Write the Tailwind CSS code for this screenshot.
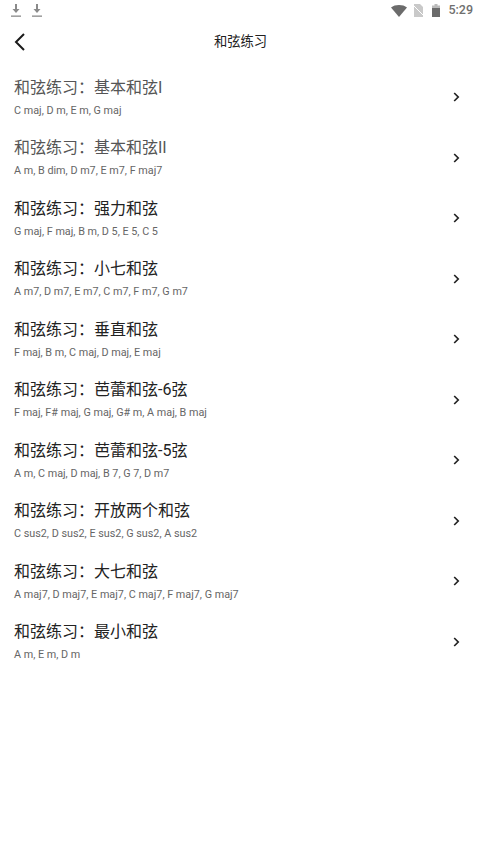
<!DOCTYPE html>
<html lang="zh">
<head>
  <meta charset="UTF-8" />
  <title>和弦练习</title>
  <script src="https://cdn.jsdelivr.net/npm/@tailwindcss/browser@4"></script>
</head>
<body class="bg-white font-['Roboto','Noto_Sans_CJK_SC',sans-serif] w-[480px] h-[854px] overflow-hidden">
  <!-- status bar -->
  <div class="h-[21px] flex items-center pl-[10px] pr-[7px] text-[#6f6f6f]">
    <svg class="w-[12px] h-[15px] mr-[9px]" viewBox="0 0 12 15" fill="#8a8a8a"><path d="M5 1h2v5h2.5L6 10 2.500 6H5z"/><rect x="1" y="12.500" width="10" height="1.300"/></svg>
    <svg class="w-[12px] h-[15px]" viewBox="0 0 12 15" fill="#8a8a8a"><path d="M5 1h2v5h2.5L6 10 2.500 6H5z"/><rect x="1" y="12.500" width="10" height="1.300"/></svg>
    <div class="flex-1"></div>
    <svg class="w-[16px] h-[12px] mr-[6px]" viewBox="0 0 16 12" fill="#6b6b6b"><path d="M0 2.500C2 .8 5 0 8 0s6 .8 8 2.500L8 12z"/></svg>
    <svg class="w-[11px] h-[13px] mr-[8px]" viewBox="0 0 11 13"><path d="M1 0h6l3 3v10H1z" fill="#c9c9c9"/><path d="M0 1l11 11" stroke="#fff" stroke-width="1"/></svg>
    <svg class="w-[8px] h-[13px] mr-[8px]" viewBox="0 0 8 13"><rect x="2.500" y="0" width="3" height="2" fill="#bbb"/><rect x="0" y="1.500" width="8" height="3" fill="#bbb"/><rect x="0" y="4" width="8" height="9" fill="#6b6b6b"/></svg>
    <span class="text-[12.500px] font-medium leading-none">5:29</span>
  </div>
  <!-- title bar -->
  <div class="h-[42px] flex items-center relative">
    <svg class="w-[12px] h-[18px] ml-[14px]" viewBox="0 0 12 18" fill="none" stroke="#1a1a1a" stroke-width="2"><path d="M10 1L2 9l8 8"/></svg>
    <div class="flex-1 text-center text-[13.300px] text-[#222] pr-[25px]">和弦练习</div>
  </div>
  <!-- list -->
  <div class="mt-[4px]">
    <div class="h-[60.500px] flex items-center pl-[14px] pr-[20px]">
      <div class="flex-1">
        <div class="text-[16px] leading-[22px] text-[#555]">和弦练习：基本和弦I</div>
        <div class="text-[10.800px] leading-[14px] mt-[5px] text-[#666]">C maj, D m, E m, G maj</div>
      </div>
      <svg class="w-[7px] h-[10px]" viewBox="0 0 7 10" fill="none" stroke="#222" stroke-width="1.700"><path d="M1.200 1l4 4-4 4"/></svg>
    </div>
    <div class="h-[60.500px] flex items-center pl-[14px] pr-[20px]">
      <div class="flex-1">
        <div class="text-[16px] leading-[22px] text-[#555]">和弦练习：基本和弦II</div>
        <div class="text-[10.800px] leading-[14px] mt-[5px] text-[#666]">A m, B dim, D m7, E m7, F maj7</div>
      </div>
      <svg class="w-[7px] h-[10px]" viewBox="0 0 7 10" fill="none" stroke="#222" stroke-width="1.700"><path d="M1.200 1l4 4-4 4"/></svg>
    </div>
    <div class="h-[60.500px] flex items-center pl-[14px] pr-[20px]">
      <div class="flex-1">
        <div class="text-[16px] leading-[22px] text-[#222]">和弦练习：强力和弦</div>
        <div class="text-[10.800px] leading-[14px] mt-[5px] text-[#666]">G maj, F maj, B m, D 5, E 5, C 5</div>
      </div>
      <svg class="w-[7px] h-[10px]" viewBox="0 0 7 10" fill="none" stroke="#222" stroke-width="1.700"><path d="M1.200 1l4 4-4 4"/></svg>
    </div>
    <div class="h-[60.500px] flex items-center pl-[14px] pr-[20px]">
      <div class="flex-1">
        <div class="text-[16px] leading-[22px] text-[#222]">和弦练习：小七和弦</div>
        <div class="text-[10.800px] leading-[14px] mt-[5px] text-[#666]">A m7, D m7, E m7, C m7, F m7, G m7</div>
      </div>
      <svg class="w-[7px] h-[10px]" viewBox="0 0 7 10" fill="none" stroke="#222" stroke-width="1.700"><path d="M1.200 1l4 4-4 4"/></svg>
    </div>
    <div class="h-[60.500px] flex items-center pl-[14px] pr-[20px]">
      <div class="flex-1">
        <div class="text-[16px] leading-[22px] text-[#222]">和弦练习：垂直和弦</div>
        <div class="text-[10.800px] leading-[14px] mt-[5px] text-[#666]">F maj, B m, C maj, D maj, E maj</div>
      </div>
      <svg class="w-[7px] h-[10px]" viewBox="0 0 7 10" fill="none" stroke="#222" stroke-width="1.700"><path d="M1.200 1l4 4-4 4"/></svg>
    </div>
    <div class="h-[60.500px] flex items-center pl-[14px] pr-[20px]">
      <div class="flex-1">
        <div class="text-[16px] leading-[22px] text-[#222]">和弦练习：芭蕾和弦-6弦</div>
        <div class="text-[10.800px] leading-[14px] mt-[5px] text-[#666]">F maj, F# maj, G maj, G# m, A maj, B maj</div>
      </div>
      <svg class="w-[7px] h-[10px]" viewBox="0 0 7 10" fill="none" stroke="#222" stroke-width="1.700"><path d="M1.200 1l4 4-4 4"/></svg>
    </div>
    <div class="h-[60.500px] flex items-center pl-[14px] pr-[20px]">
      <div class="flex-1">
        <div class="text-[16px] leading-[22px] text-[#222]">和弦练习：芭蕾和弦-5弦</div>
        <div class="text-[10.800px] leading-[14px] mt-[5px] text-[#666]">A m, C maj, D maj, B 7, G 7, D m7</div>
      </div>
      <svg class="w-[7px] h-[10px]" viewBox="0 0 7 10" fill="none" stroke="#222" stroke-width="1.700"><path d="M1.200 1l4 4-4 4"/></svg>
    </div>
    <div class="h-[60.500px] flex items-center pl-[14px] pr-[20px]">
      <div class="flex-1">
        <div class="text-[16px] leading-[22px] text-[#222]">和弦练习：开放两个和弦</div>
        <div class="text-[10.800px] leading-[14px] mt-[5px] text-[#666]">C sus2, D sus2, E sus2, G sus2, A sus2</div>
      </div>
      <svg class="w-[7px] h-[10px]" viewBox="0 0 7 10" fill="none" stroke="#222" stroke-width="1.700"><path d="M1.200 1l4 4-4 4"/></svg>
    </div>
    <div class="h-[60.500px] flex items-center pl-[14px] pr-[20px]">
      <div class="flex-1">
        <div class="text-[16px] leading-[22px] text-[#222]">和弦练习：大七和弦</div>
        <div class="text-[10.800px] leading-[14px] mt-[5px] text-[#666]">A maj7, D maj7, E maj7, C maj7, F maj7, G maj7</div>
      </div>
      <svg class="w-[7px] h-[10px]" viewBox="0 0 7 10" fill="none" stroke="#222" stroke-width="1.700"><path d="M1.200 1l4 4-4 4"/></svg>
    </div>
    <div class="h-[60.500px] flex items-center pl-[14px] pr-[20px]">
      <div class="flex-1">
        <div class="text-[16px] leading-[22px] text-[#222]">和弦练习：最小和弦</div>
        <div class="text-[10.800px] leading-[14px] mt-[5px] text-[#666]">A m, E m, D m</div>
      </div>
      <svg class="w-[7px] h-[10px]" viewBox="0 0 7 10" fill="none" stroke="#222" stroke-width="1.700"><path d="M1.200 1l4 4-4 4"/></svg>
    </div>
  </div>
</body>
</html>
